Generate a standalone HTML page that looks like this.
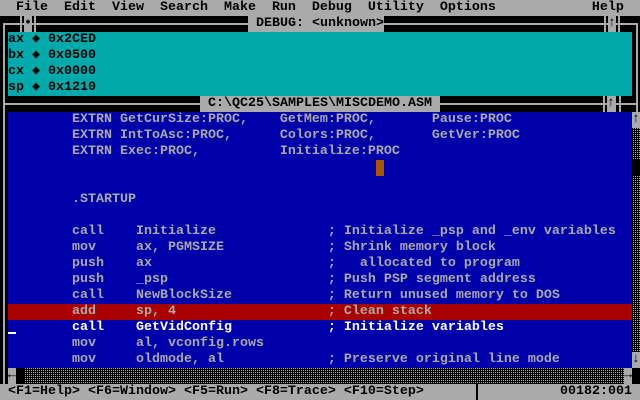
<!DOCTYPE html>
<html><head><meta charset="utf-8"><style>
*{margin:0;padding:0}
body{width:640px;height:400px;background:#000;position:relative;overflow:hidden;font-family:"Liberation Mono","DejaVu Sans Mono",monospace;font-size:13.33px;line-height:16px;font-weight:bold}
.r{position:absolute;left:0;white-space:pre;height:16px}
.b{position:absolute}
.g{color:#aaa}.w{color:#fff}.k{color:#000}
.dither{background-color:#aaa;background-image:repeating-linear-gradient(0deg,#000 0 1px,transparent 1px 2px),repeating-linear-gradient(90deg,#000 0 1px,transparent 1px 2px);opacity:1}
</style></head><body>
<div class="b" style="left:0;top:0;width:640px;height:16px;background:#aaa"></div>
<div class="r k" style="top:0">  File  Edit  View  Search  Make  Run  Debug  Utility  Options            Help</div>
<div class="b" style="left:3px;top:24px;width:2px;height:360px;background:#aaa"></div>
<div class="b" style="left:3px;top:23px;width:617px;height:2px;background:#aaa"></div>
<div class="b" style="left:620px;top:23px;width:18px;height:2px;background:#aaa"></div>
<div class="b" style="left:636px;top:24px;width:2px;height:88px;background:#aaa"></div>
<div class="b" style="left:3px;top:103px;width:635px;height:2px;background:#aaa"></div>
<div class="b" style="left:20px;top:16px;width:2px;height:16px;background:#aaa"></div>
<div class="b" style="left:24px;top:16px;width:8px;height:16px;background:#aaa"></div>
<div class="b" style="left:34px;top:16px;width:2px;height:16px;background:#aaa"></div>
<div class="r k" style="top:16px;left:24px">•</div>
<div class="b" style="left:248px;top:16px;width:136px;height:16px;background:#aaa"></div>
<div class="r k" style="top:16px;left:248px"> DEBUG: &lt;unknown&gt;</div>
<div class="b" style="left:604px;top:16px;width:2px;height:16px;background:#aaa"></div>
<div class="b" style="left:608px;top:16px;width:8px;height:16px;background:#aaa"></div>
<div class="b" style="left:618px;top:16px;width:2px;height:16px;background:#aaa"></div>
<div class="r k" style="top:16px;left:608px">↑</div>
<div class="b" style="left:8px;top:32px;width:624px;height:64px;background:#00aaaa"></div>
<div class="r k" style="top:32px;left:8px">ax ◆ 0x2CED</div>
<div class="r k" style="top:48px;left:8px">bx ◆ 0x0500</div>
<div class="r k" style="top:64px;left:8px">cx ◆ 0x0000</div>
<div class="r k" style="top:80px;left:8px">sp ◆ 0x1210</div>
<div class="b" style="left:200px;top:96px;width:240px;height:16px;background:#aaa"></div>
<div class="r k" style="top:96px;left:208px">C:\QC25\SAMPLES\MISCDEMO.ASM</div>
<div class="b" style="left:603px;top:96px;width:2px;height:16px;background:#aaa"></div>
<div class="b" style="left:607px;top:96px;width:9px;height:16px;background:#aaa"></div>
<div class="b" style="left:619px;top:96px;width:2px;height:16px;background:#aaa"></div>
<div class="r k" style="top:96px;left:607px">↑</div>
<div class="b" style="left:8px;top:112px;width:624px;height:256px;background:#0000aa"></div>
<div class="b" style="left:8px;top:304px;width:624px;height:16px;background:#aa0000"></div>
<div class="b" style="left:376px;top:160px;width:8px;height:16px;background:#aa5500"></div>
<div class="b" style="left:8px;top:332px;width:8px;height:2px;background:#fff"></div>
<div class="r g" style="top:112px">         EXTRN GetCurSize:PROC,    GetMem:PROC,       Pause:PROC</div>
<div class="r g" style="top:128px">         EXTRN IntToAsc:PROC,      Colors:PROC,       GetVer:PROC</div>
<div class="r g" style="top:144px">         EXTRN Exec:PROC,          Initialize:PROC</div>
<div class="r g" style="top:192px">         .STARTUP</div>
<div class="r g" style="top:224px">         call    Initialize              ; Initialize _psp and _env variables</div>
<div class="r g" style="top:240px">         mov     ax, PGMSIZE             ; Shrink memory block</div>
<div class="r g" style="top:256px">         push    ax                      ;   allocated to program</div>
<div class="r g" style="top:272px">         push    _psp                    ; Push PSP segment address</div>
<div class="r g" style="top:288px">         call    NewBlockSize            ; Return unused memory to DOS</div>
<div class="r g" style="top:304px">         add     sp, 4                   ; Clean stack</div>
<div class="r w" style="top:320px">         call    GetVidConfig            ; Initialize variables</div>
<div class="r g" style="top:336px">         mov     al, vconfig.rows</div>
<div class="r g" style="top:352px">         mov     oldmode, al             ; Preserve original line mode</div>
<div class="b dither" style="left:632px;top:128px;width:8px;height:224px"></div>
<div class="b" style="left:632px;top:160px;width:8px;height:16px;background:#000"></div>
<div class="b" style="left:632px;top:112px;width:8px;height:16px;background:#aaa"></div>
<div class="r k" style="top:112px;left:632px">↑</div>
<div class="b" style="left:632px;top:352px;width:8px;height:16px;background:#aaa"></div>
<div class="r k" style="top:352px;left:632px">↓</div>
<div class="b dither" style="left:16px;top:368px;width:616px;height:16px"></div>
<div class="b" style="left:8px;top:368px;width:8px;height:16px;background:#aaa"></div>
<div class="r k" style="top:368px;left:8px">←</div>
<div class="b" style="left:16px;top:368px;width:8px;height:16px;background:#000"></div>
<div class="b" style="left:624px;top:368px;width:8px;height:16px;background:#aaa"></div>
<div class="r k" style="top:368px;left:624px">→</div>
<div class="b" style="left:0;top:384px;width:640px;height:16px;background:#aaa"></div>
<div class="r k" style="top:384px"> &lt;F1=Help&gt; &lt;F6=Window&gt; &lt;F5=Run&gt; &lt;F8=Trace&gt; &lt;F10=Step&gt;</div>
<div class="b" style="left:476px;top:384px;width:2px;height:16px;background:#000"></div>
<div class="r k" style="top:384px;left:560px">00182:001</div>
</body></html>
